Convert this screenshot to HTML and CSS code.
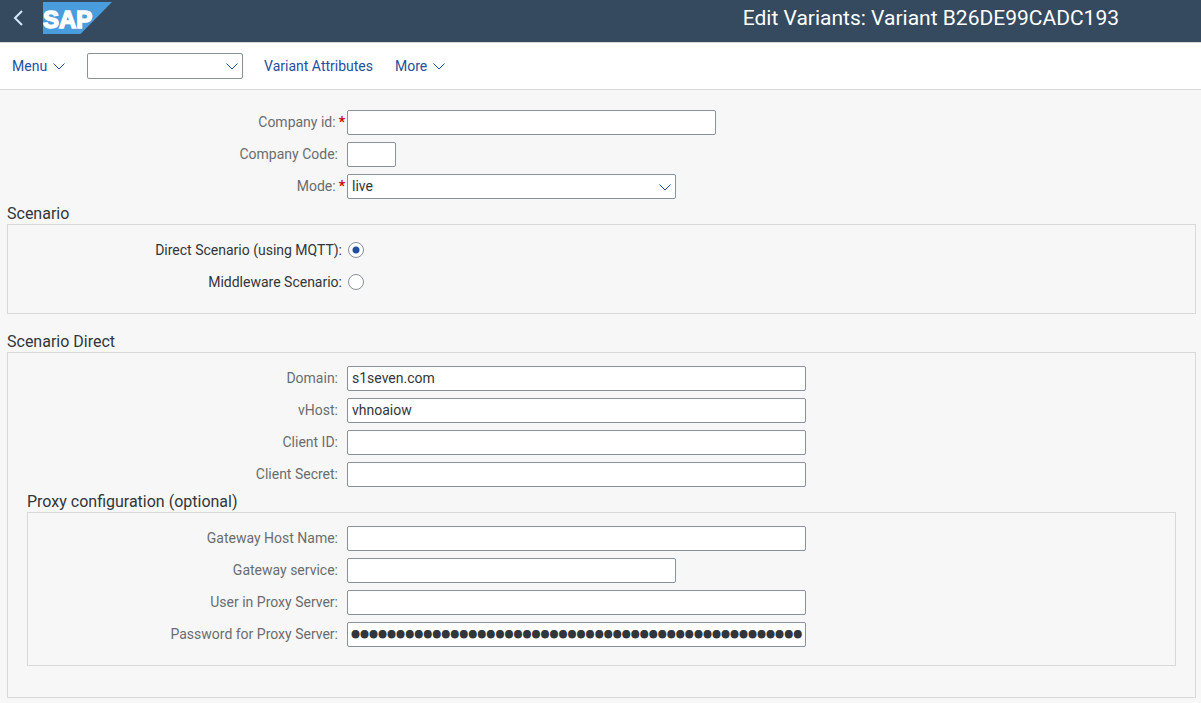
FILE: index.html
```html
<!DOCTYPE html>
<html lang="en">
<head>
<meta charset="utf-8">
<meta name="viewport" content="width=device-width, initial-scale=1">
<title>Edit Variants</title>
<link rel="stylesheet" href="styles.css">
</head>
<body>
<header class="shell">
  <button class="back" type="button" aria-label="Back">
    <svg width="12" height="16" viewBox="0 0 12 16"><path d="M10 1 3 8l7 7" fill="none" stroke="currentColor" stroke-width="2"/></svg>
  </button>
  <svg class="logo" width="69" height="32" viewBox="0 0 69 32" role="img" aria-label="SAP">
    <path d="M0 0H69L37.500 32H0z" fill="#4a9ddd"/>
    <text class="logo-text" x="0" y="26">SAP</text>
  </svg>
  <h1 class="title">Edit Variants: Variant B26DE99CADC193</h1>
</header>
<nav class="toolbar">
  <button class="tool" type="button">Menu
    <svg class="chevron" width="12" height="8" viewBox="0 0 12 8"><path d="M.5 1.500 6 7l5.500-5.500"/></svg>
  </button>
  <span class="select command">
    <select aria-label="Command"><option></option></select>
    <svg class="chevron" width="12" height="8" viewBox="0 0 12 8"><path d="M.5 1.500 6 7l5.500-5.500"/></svg>
  </span>
  <button class="tool" type="button">Variant Attributes</button>
  <button class="tool" type="button">More
    <svg class="chevron" width="12" height="8" viewBox="0 0 12 8"><path d="M.5 1.500 6 7l5.500-5.500"/></svg>
  </button>
</nav>
<main class="page">
  <form>
    <div class="fields">
      <div class="row"><label class="required" for="company-id">Company id:</label><input class="field medium" id="company-id" type="text" required></div>
      <div class="row"><label for="company-code">Company Code:</label><input class="field tiny" id="company-code" type="text"></div>
      <div class="row"><label class="required" for="mode">Mode:</label>
        <span class="select short">
          <select id="mode"><option>live</option></select>
          <svg class="chevron" width="12" height="8" viewBox="0 0 12 8"><path d="M.5 1.500 6 7l5.500-5.500"/></svg>
        </span>
      </div>
    </div>

    <section class="group">
      <h2>Scenario</h2>
      <div class="box">
        <div class="fields">
          <div class="row choice"><label for="direct">Direct Scenario (using MQTT):</label><input id="direct" name="scenario" type="radio" checked></div>
          <div class="row choice"><label for="middleware">Middleware Scenario:</label><input id="middleware" name="scenario" type="radio"></div>
        </div>
      </div>
    </section>

    <section class="group spaced">
      <h2>Scenario Direct</h2>
      <div class="box outer">
        <div class="fields">
          <div class="row"><label for="domain">Domain:</label><input class="field long" id="domain" type="text" value="s1seven.com"></div>
          <div class="row"><label for="vhost">vHost:</label><input class="field long" id="vhost" type="text" value="vhnoaiow"></div>
          <div class="row"><label for="client-id">Client ID:</label><input class="field long" id="client-id" type="text"></div>
          <div class="row"><label for="client-secret">Client Secret:</label><input class="field long" id="client-secret" type="text"></div>
        </div>
        <section class="group">
          <h2>Proxy configuration (optional)</h2>
          <div class="box inner">
            <div class="fields">
              <div class="row"><label for="gateway-host">Gateway Host Name:</label><input class="field long" id="gateway-host" type="text"></div>
              <div class="row"><label for="gateway-service">Gateway service:</label><input class="field short" id="gateway-service" type="text"></div>
              <div class="row"><label for="proxy-user">User in Proxy Server:</label><input class="field long" id="proxy-user" type="text"></div>
              <div class="row"><label for="proxy-password">Password for Proxy Server:</label><input class="field long password" id="proxy-password" type="password" value="00000000000000000000000000000000000000000000000000"></div>
            </div>
          </div>
        </section>
      </div>
    </section>
  </form>
</main>
</body>
</html>
```
FILE: styles.css
```css
* { box-sizing: border-box; }

body {
  margin: 0;
  background: #f7f7f7;
  color: #32363a;
  font: 14px/20px Roboto, "Liberation Sans", sans-serif;
}

button, input, select { font: inherit; color: inherit; }

.shell {
  display: flex;
  align-items: center;
  height: 42px;
  padding: 0 82px 6px 12px;
  background: #354a5f;
  color: #fff;
}

.back {
  display: flex;
  margin-right: 19px;
  padding: 0;
  border: 0;
  background: none;
  color: #d1e8ff;
}

.logo-text {
  fill: #fff;
  stroke: #fff;
  stroke-width: 1.5;
  font: bold 24px "Liberation Sans", sans-serif;
}

.title {
  margin: 0 0 0 auto;
  font-size: 21px;
  font-weight: 400;
  line-height: 24px;
}

.toolbar {
  display: flex;
  align-items: center;
  height: 48px;
  padding: 0 12px;
  border: solid #d9d9d9;
  border-width: 1px 0;
  background: #fff;
}

.tool {
  display: flex;
  align-items: center;
  gap: 6px;
  margin-right: 22px;
  padding: 0;
  border: 0;
  background: none;
  color: #1f4f9e;
}

.chevron {
  fill: none;
  stroke: #1f4f9e;
  stroke-width: 1;
}

.select {
  position: relative;
  display: block;
}

.select select {
  display: block;
  width: 100%;
  height: 25px;
  padding: 0 24px 2px 4px;
  border: 1px solid #89919a;
  border-radius: 2px;
  appearance: none;
  background: #fff;
}

.select .chevron {
  position: absolute;
  top: 9px;
  right: 5px;
  pointer-events: none;
}

.command {
  width: 156px;
  margin-right: 21px;
}

.command select { height: 26px; }

.page {
  --label: 340px;
  padding: 20px 5px 5px 7px;
}

.fields {
  display: grid;
  gap: 7px;
}

.row {
  display: grid;
  grid-template-columns: var(--label) 1fr;
  align-items: center;
  min-height: 25px;
}

.row label {
  padding-right: 9px;
  padding-bottom: 2px;
  color: #6a6d70;
  text-align: right;
}

.row .required { padding-right: 2px; }

.required::after {
  margin-left: 3px;
  color: #c00;
  font-weight: 700;
  content: "*";
}

.row.choice { padding-bottom: 1px; }

.row.choice label {
  padding-right: 5px;
  padding-bottom: 1px;
  color: #32363a;
}

.field {
  height: 25px;
  padding: 0 4px 1px;
  border: 1px solid #89919a;
  border-radius: 2px;
  background: #fff;
}

.tiny { width: 49px; }
.short { width: 329px; }
.medium { width: 369px; }
.long { width: 459px; }

.password {
  padding: 0 0 3px 3px;
  font: 24px/20px "Open Sans", sans-serif;
  -webkit-text-stroke: 3px #32363a;
}

input[type="radio"] {
  width: 16px;
  height: 16px;
  margin: 0 1px;
  border: 1px solid #89919a;
  border-radius: 50%;
  appearance: none;
  background: #fff;
}

input[type="radio"]:checked {
  background: radial-gradient(circle, #1f4f9e 3px, #fff 4px);
}

.group { padding-top: 5px; }
.group.spaced { padding-top: 18px; }

.group h2 {
  margin: 0;
  font-size: 16px;
  font-weight: 400;
  line-height: 20px;
}

.box {
  --label: 339px;
  padding: 13px 0 18px;
  border: 1px solid #d9d9d9;
}

.outer { padding-bottom: 31px; }
.outer .group { padding-right: 19px; padding-left: 19px; }
.inner { --label: 319px; }
```
